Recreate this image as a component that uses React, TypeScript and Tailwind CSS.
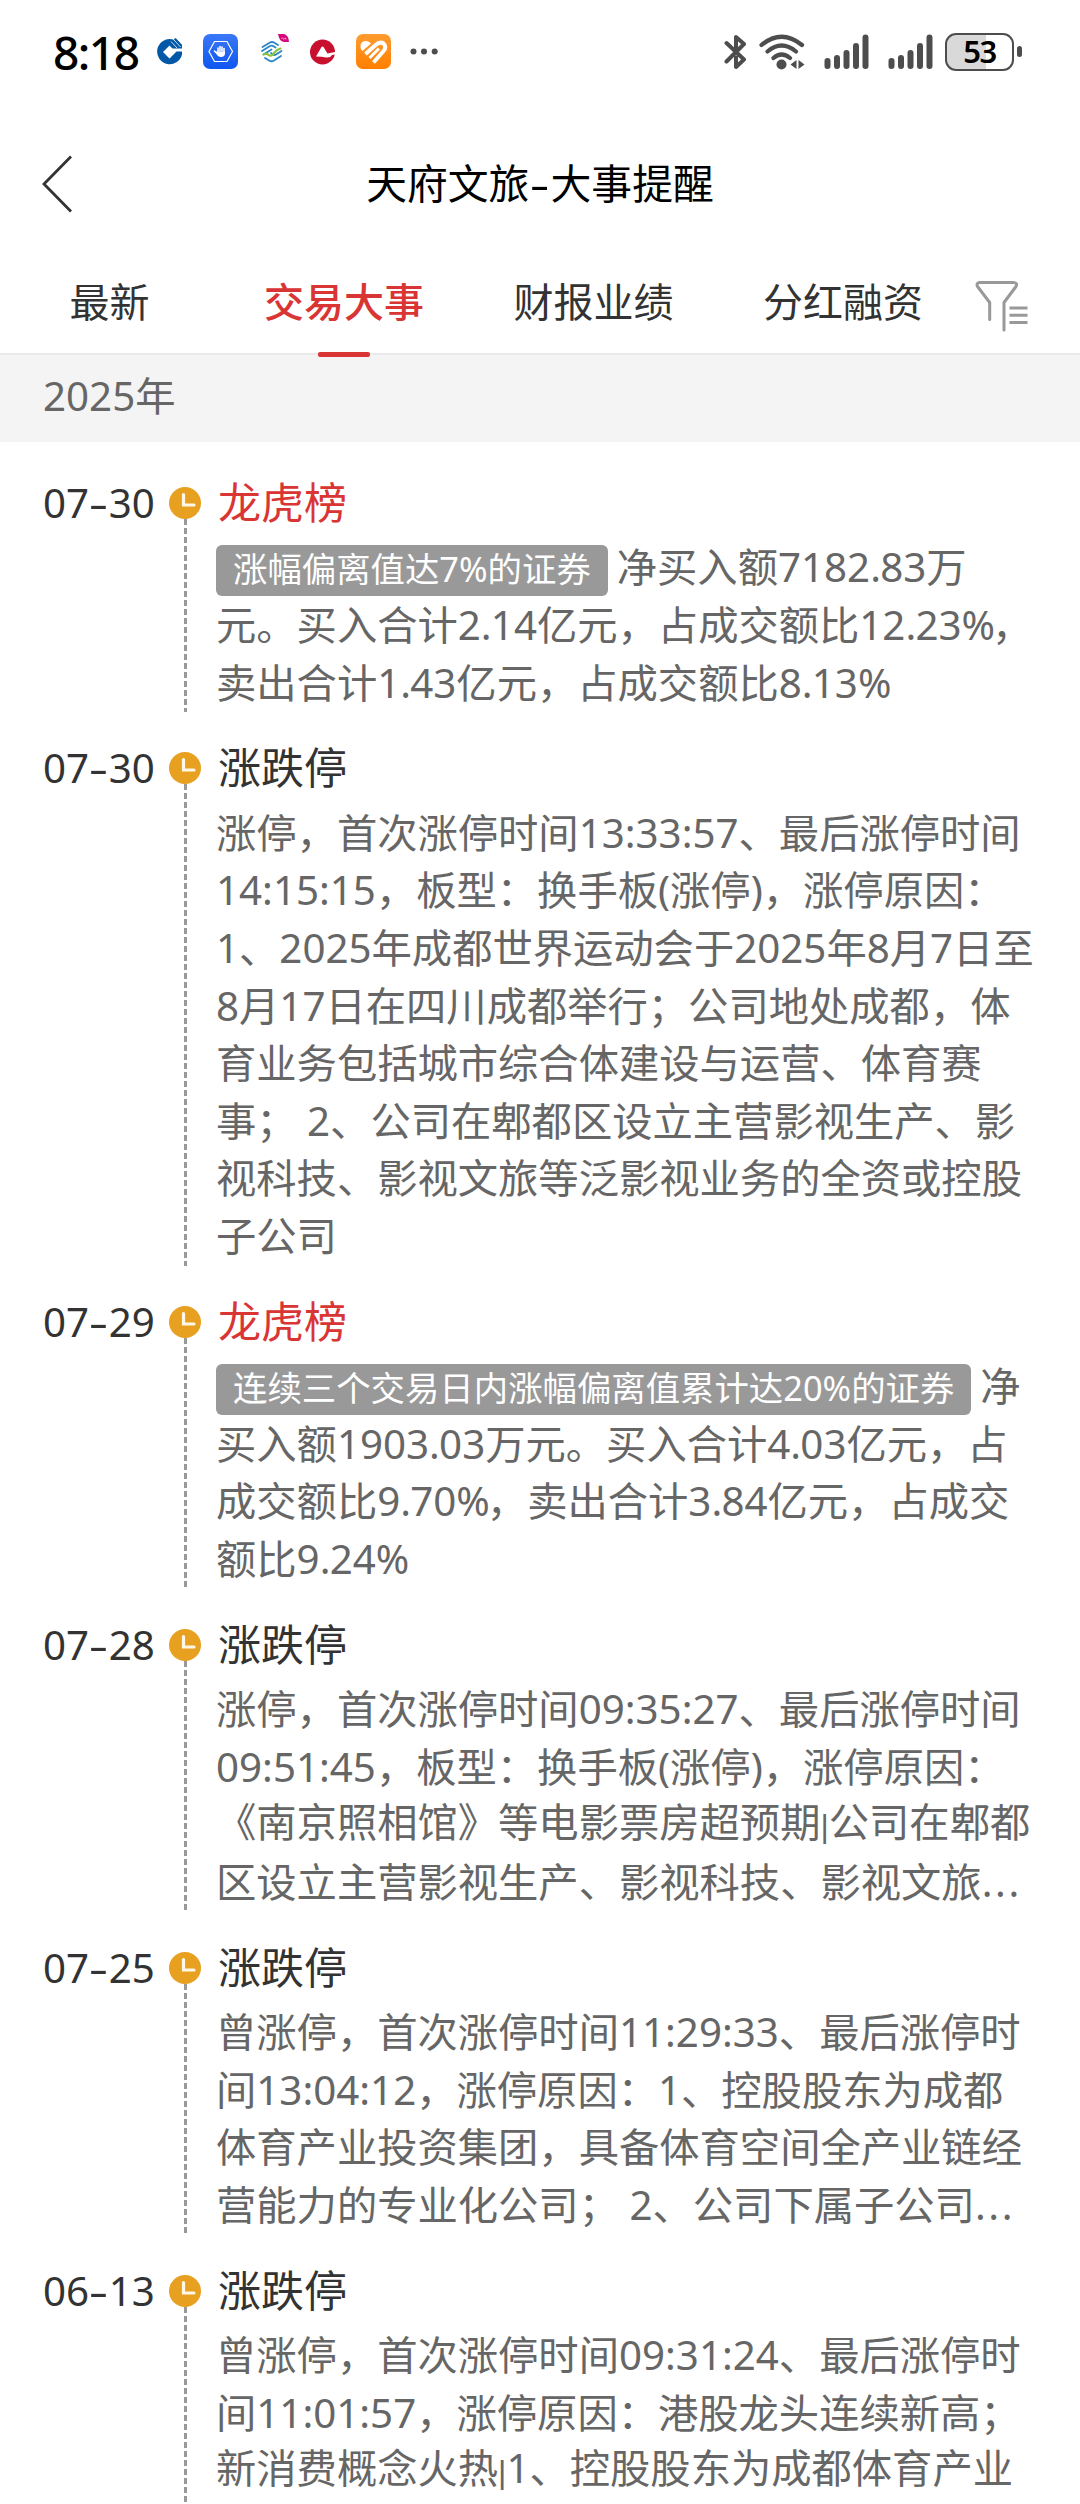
import React from 'react'

type Entry = {
  date: string
  title: string
  hot?: boolean
  tag?: string
  lines: string[]
}

const tabs = [
  { label: '最新', width: 'w-[219px]' },
  { label: '交易大事', width: 'w-[250px]', active: true },
  { label: '财报业绩', width: 'w-[249px]' },
  { label: '分红融资', width: 'w-[250px]' },
]

const entries: Entry[] = [
  {
    date: '07-30',
    title: '龙虎榜',
    hot: true,
    tag: '涨幅偏离值达7%的证券',
    lines: ['净买入额7182.83万', '元。买入合计2.14亿元，占成交额比12.23%，', '卖出合计1.43亿元，占成交额比8.13%'],
  },
  {
    date: '07-30',
    title: '涨跌停',
    lines: [
      '涨停，首次涨停时间13:33:57、最后涨停时间',
      '14:15:15，板型：换手板(涨停)，涨停原因：',
      '1、2025年成都世界运动会于2025年8月7日至',
      '8月17日在四川成都举行；公司地处成都，体',
      '育业务包括城市综合体建设与运营、体育赛',
      '事； 2、公司在郫都区设立主营影视生产、影',
      '视科技、影视文旅等泛影视业务的全资或控股',
      '子公司',
    ],
  },
  {
    date: '07-29',
    title: '龙虎榜',
    hot: true,
    tag: '连续三个交易日内涨幅偏离值累计达20%的证券',
    lines: ['净', '买入额1903.03万元。买入合计4.03亿元，占', '成交额比9.70%，卖出合计3.84亿元，占成交', '额比9.24%'],
  },
  {
    date: '07-28',
    title: '涨跌停',
    lines: [
      '涨停，首次涨停时间09:35:27、最后涨停时间',
      '09:51:45，板型：换手板(涨停)，涨停原因：',
      '《南京照相馆》等电影票房超预期|公司在郫都',
      '区设立主营影视生产、影视科技、影视文旅...',
    ],
  },
  {
    date: '07-25',
    title: '涨跌停',
    lines: [
      '曾涨停，首次涨停时间11:29:33、最后涨停时',
      '间13:04:12，涨停原因：1、控股股东为成都',
      '体育产业投资集团，具备体育空间全产业链经',
      '营能力的专业化公司； 2、公司下属子公司...',
    ],
  },
  {
    date: '06-13',
    title: '涨跌停',
    lines: [
      '曾涨停，首次涨停时间09:31:24、最后涨停时',
      '间11:01:57，涨停原因：港股龙头连续新高；',
      '新消费概念火热|1、控股股东为成都体育产业',
    ],
  },
]

// optical spacing for the marks that sit too wide or too tight next to the Chinese text
const spacing: Record<string, string> = {
  '|': "font-['Liberation_Sans'] text-[32px]",
  '%': 'tracking-[-3px]',
  '...': 'tracking-[2.600px]',
  '.': 'tracking-[-0.800px]',
}

const Line = ({ text }: { text: string }) => (
  <span className="whitespace-pre">
    {text.split(/(\||%|\.\.\.|\.)/).map((part, i) =>
      spacing[part] ? (
        <span key={i} className={spacing[part]}>{part}</span>
      ) : (
        part
      )
    )}
  </span>
)

const Signal = () => (
  <svg width="46" height="36" viewBox="0 0 46 36" stroke="#4d4d4d" strokeWidth="6" strokeLinecap="round">
    <path d="M3.500 27v5M13 24v8M22.500 19v13M32 12v20M41.500 3.500v28.500" />
  </svg>
)

const StatusBar = () => (
  <div className="flex h-[103px] items-center justify-between pl-[53px] pr-[58px]">
    <div className="flex items-center">
      <span className="w-[104px] text-[46px] leading-none font-medium tracking-[-1.500px] text-black">8:18</span>
      <svg width="25" height="27" viewBox="0 0 25 27" fill="none">
        <path d="M15 1.200A12.600 12.600 0 1 0 25 16.500V13.500H19.500L12.500 20.500 6 14 12.500 7.500 15.500 10.500H25V8.500Z" fill="#0058a6" />
        <path d="M14.500 2.500l7 7.500M17.500 1l7 7.500" stroke="#0058a6" strokeWidth="3" />
        <path d="M14 3.500l6.500 7M17 2l6.500 7" stroke="#fff" strokeWidth=".8" />
      </svg>
      <svg className="ml-[21px]" width="35" height="35" viewBox="0 0 35 35" fill="none">
        <defs>
          <linearGradient id="blue" x1="0" y1="0" x2="0" y2="1">
            <stop stopColor="#3a78f8" />
            <stop offset="1" stopColor="#0f56f0" />
          </linearGradient>
        </defs>
        <rect width="35" height="35" rx="7" fill="url(#blue)" />
        <path d="M11.500 7.500h12.500l5.500 10-5.500 10H11.500L6 17.500Z" stroke="#fff" strokeWidth="1.200" />
        <path d="M13.500 19l-2-2M15 18V14M17 17v-4.500M19 17v-4M21 18v-3.500" stroke="#fff" strokeWidth="1.600" strokeLinecap="round" />
        <path d="M13 17.500h9V20q-.5 3-4 3t-5-4Z" fill="#fff" />
      </svg>
      <svg className="ml-[23px]" width="28" height="36" viewBox="0 0 28 36" fill="none">
        <g strokeWidth="1.800" strokeLinecap="round" strokeLinejoin="round">
          <path d="M1.500 13L9 8.500q2-1 4 0L17 11M1 17l8-5q2-1 4 .5l1.500 1" stroke="#2a86c8" />
          <path d="M2.500 20.500l8-5M10 19l2 1.500q1.500 1 3 0l5.500-3.500M4 24l4 2.500q2.500 1.500 5 0l7-4.500" stroke="#2a86c8" />
          <path d="M2.500 20.500l2-.5q1.500-.5 3 .8 2 1.500 4 0L14 18q2-2.500 5.500-3.500" stroke="#8bc53f" strokeWidth="2.200" />
        </g>
        <path d="M17 0h6q4.500 1 5 8h-5q-5-1-6-8Z" fill="#d6087f" />
        <path d="M20.500 4.500q1-1.500 1.500 0t1.500 0 1.500 1" stroke="#fbb" strokeWidth=".9" />
      </svg>
      <svg className="ml-[21px]" width="25" height="26" viewBox="0 0 25 26">
        <circle cx="12.500" cy="13" r="12.500" fill="#c8102e" />
        <path d="M6 17.500L11.500 8q1-1 2 0l4 6.500 7.500-1.500v2.500l-3 .5q-1.500 3-6 2.500l-4.500-.8Z" fill="#fff" />
      </svg>
      <svg className="ml-[21px]" width="35" height="35" viewBox="0 0 35 35" fill="none">
        <defs>
          <linearGradient id="orange" x1="0" y1="0" x2="0" y2="1">
            <stop stopColor="#fd9c30" />
            <stop offset="1" stopColor="#ff7f00" />
          </linearGradient>
        </defs>
        <rect width="35" height="35" rx="7" fill="url(#orange)" />
        <path d="M4.500 13Q4 8 9 7q4-.5 6 2.500L6.500 17Q4.500 15.500 4.500 13Z" fill="#fff" />
        <path d="M9.500 20L19 11.500Q24 7 27.500 9.500 31 13 27.500 17L17.500 28.500" stroke="#fff" strokeWidth="4" />
        <path d="M13.500 24L23 14.500" stroke="#fff" strokeWidth="3" />
      </svg>
      <svg className="ml-[19px]" width="28" height="8" viewBox="0 0 28 8" fill="#4d4d4d">
        <circle cx="3.500" cy="3.500" r="3" />
        <circle cx="14" cy="3.500" r="3" />
        <circle cx="24.700" cy="3.500" r="3" />
      </svg>
    </div>
    <div className="flex items-center">
      <svg width="24" height="36" viewBox="0 0 24 36" fill="none" stroke="#4d4d4d" strokeWidth="4" strokeLinecap="round" strokeLinejoin="round">
        <path d="M2.500 9L20 25.500 12 33V23.500M2.500 27.500L20 10 12 3v11" />
      </svg>
      <svg className="ml-[11px]" width="46" height="36" viewBox="0 0 46 36" fill="none" stroke="#4d4d4d" strokeWidth="4.200" strokeLinecap="round">
        <path d="M2.500 11Q22.500-5.500 43 11M8.500 17.500Q22.500 5.500 37 17.500M14.500 24Q22.500 17 31 24" />
        <circle cx="22.500" cy="30.500" r="5" fill="#4d4d4d" stroke="none" />
        <path d="M37.500 26v9l-6-4.500ZM39.500 26v9l6-4.500Z" fill="#4d4d4d" stroke="none" />
      </svg>
      <div className="ml-[19px] flex gap-[18px]">
        <Signal />
        <Signal />
      </div>
      <div className="ml-[11px] flex h-[38px] w-[69px] items-center justify-center rounded-[11px] border-[2.500px] border-[#4d4d4d] bg-[linear-gradient(to_right,#d9d9d9_60%,#fff_60%)] text-[31px] leading-none font-semibold tracking-[-1.500px] text-black">
        53
      </div>
      <div className="ml-[3px] h-[11px] w-[5px] rounded-full bg-[#4d4d4d]" />
    </div>
  </div>
)

const Header = () => (
  <div className="flex h-[162px] items-center pl-[41px]">
    <svg width="32" height="58" viewBox="0 0 32 58" fill="none" stroke="#333" strokeWidth="2.800">
      <path d="M30 1.500L3 29l27 27.500" />
    </svg>
    <h1 className="flex-1 pr-[73px] text-center text-[40.800px] text-black">
      天府文旅<span className="mx-[4px] inline-block scale-x-150">-</span>大事提醒
    </h1>
  </div>
)

const TabBar = () => (
  <div className="flex h-[90px] border-b-2 border-[#eaeaea]">
    {tabs.map((tab) => (
      <div key={tab.label} className={`flex h-[92px] shrink-0 flex-col items-center justify-between ${tab.width}`}>
        <span className={tab.active ? 'text-[40px] leading-[74px] font-medium text-[#d93535]' : 'text-[40px] leading-[74px] text-[#333]'}>{tab.label}</span>
        {tab.active && <div className="h-[5px] w-[52px] rounded-[2px] bg-[#d93535]" />}
      </div>
    ))}
    <svg className="mt-4 ml-[7px]" width="54" height="51" viewBox="0 0 54 51" fill="none" stroke="#999" strokeWidth="3" strokeLinecap="round" strokeLinejoin="round">
      <path d="M14.700 38.500V21.500L2.500 5.500Q1 2 4.500 1.500H38.500Q43 2 41 5.500L29 21.500V49" />
      <path d="M36 27h15M36 34.300h15M36 41.600h15" strokeLinecap="square" />
    </svg>
  </div>
)

const Item = ({ date, title, hot, tag, lines }: Entry) => {
  const [month, day] = date.split('-')
  return (
    <div className="flex last:h-[300px]">
      <div className="w-[126px] shrink-0 text-[40.300px] leading-[64px] whitespace-nowrap text-[#333]">
        {month}
        <span className="mx-[3.300px] inline-block scale-x-150">-</span>
        {day}
      </div>
      <div className="flex w-8 shrink-0 flex-col items-center pt-4">
        <svg width="32" height="32" viewBox="0 0 32 32" fill="none">
          <circle cx="16" cy="16" r="16" fill="#e8a020" />
          <path d="M14.500 7.500v10.500h10.500" stroke="#fff8e8" strokeWidth="3.200" strokeLinecap="round" />
        </svg>
        <div className="w-[3px] flex-1 bg-[repeating-linear-gradient(to_bottom,#999_0_6px,transparent_6px_9px)]" />
        <div className="h-[24px]" />
      </div>
      <div className="pb-[25.400px] pl-[15px] whitespace-nowrap">
        <div className={hot ? 'mb-[3px] pl-0.5 text-[43px] leading-[64px] text-[#d93535]' : 'mb-[3px] pl-0.5 text-[43px] leading-[64px] text-[#333]'}>{title}</div>
        {lines.map((line, i) => (
          <div key={i} className="flex h-[57.650px] items-center text-[40.300px] leading-[57px] text-[#666]">
            {i === 0 && tag && (
              <span className="mt-[7px] mr-[9px] flex h-[51px] items-center rounded-md bg-[#999] px-[17px] pb-1 text-[34.400px] text-white">{tag}</span>
            )}
            <Line text={line} />
          </div>
        ))}
      </div>
    </div>
  )
}

const App = () => {
  return (
    <div className="h-[2504px] w-[1080px] overflow-hidden bg-white font-['Noto_Sans','Noto_Sans_CJK_SC',sans-serif]">
      <StatusBar />
      <Header />
      <TabBar />
      <div className="flex h-[87px] items-center bg-[#f4f4f4] pb-1 pl-[43px] text-[40.300px] text-[#666]">2025年</div>
      <div className="pt-[29px] pl-[43px]">
        {entries.map((entry, i) => (
          <Item key={i} {...entry} />
        ))}
      </div>
    </div>
  )
}

export default App
